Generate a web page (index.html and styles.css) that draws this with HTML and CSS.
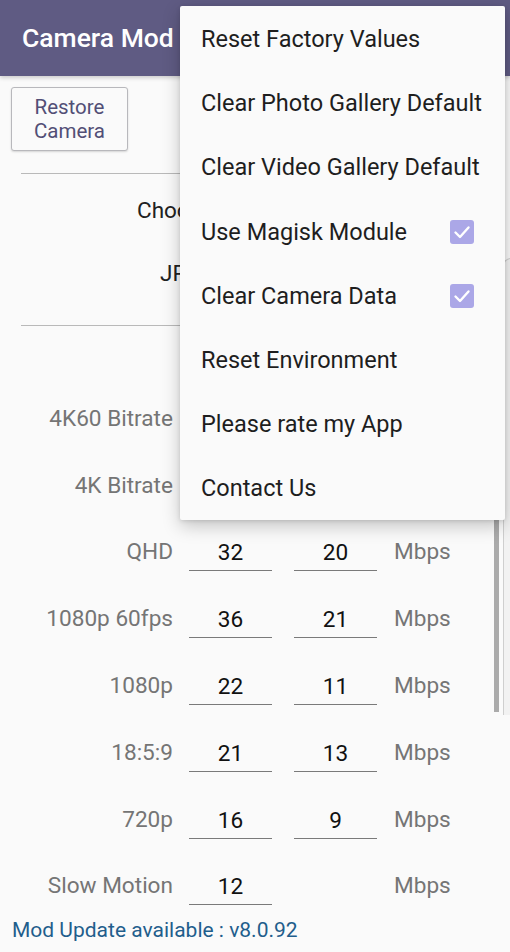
FILE: index.html
```html
<!DOCTYPE html>
<html>
<head>
<meta charset="utf-8">
<link rel="stylesheet" href="styles.css">
</head>
<body>
<div class="screen">
  <header class="appbar"><span class="title">Camera Mod</span></header>
  <main class="content">
    <button class="restore">Restore<br>Camera</button>
    <hr class="divider">
    <div class="choice choice-a">Choose Camera Mode</div>
    <div class="choice choice-b">JPEG Quality</div>
    <hr class="divider">
    <div class="rates">
      <div class="row"><span class="label">4K60 Bitrate</span><span class="field"></span><span class="field"></span><span class="unit"></span></div>
      <div class="row"><span class="label">4K Bitrate</span><span class="field"></span><span class="field"></span><span class="unit"></span></div>
      <div class="row"><span class="label">QHD</span><span class="field">32</span><span class="field">20</span><span class="unit">Mbps</span></div>
      <div class="row"><span class="label">1080p 60fps</span><span class="field">36</span><span class="field">21</span><span class="unit">Mbps</span></div>
      <div class="row"><span class="label">1080p</span><span class="field">22</span><span class="field">11</span><span class="unit">Mbps</span></div>
      <div class="row"><span class="label">18:5:9</span><span class="field">21</span><span class="field">13</span><span class="unit">Mbps</span></div>
      <div class="row"><span class="label">720p</span><span class="field">16</span><span class="field">9</span><span class="unit">Mbps</span></div>
      <div class="row"><span class="label">Slow Motion</span><span class="field">12</span><span class="empty"></span><span class="unit">Mbps</span></div>
    </div>
    <div class="update">Mod Update available : v8.0.92</div>
  </main>
  <div class="edge-panel"></div>
  <div class="scrollbar"></div>
  <ul class="menu">
    <li class="item">Reset Factory Values</li>
    <li class="item">Clear Photo Gallery Default</li>
    <li class="item">Clear Video Gallery Default</li>
    <li class="item">Use Magisk Module<span class="check"><svg viewBox="0 0 24 24" width="24" height="24"><path d="M5.5 12.5 L10 17 L18.5 7.5" fill="none" stroke="#fff" stroke-width="2.4" stroke-linecap="round" stroke-linejoin="round"/></svg></span></li>
    <li class="item">Clear Camera Data<span class="check"><svg viewBox="0 0 24 24" width="24" height="24"><path d="M5.5 12.5 L10 17 L18.5 7.5" fill="none" stroke="#fff" stroke-width="2.4" stroke-linecap="round" stroke-linejoin="round"/></svg></span></li>
    <li class="item">Reset Environment</li>
    <li class="item">Please rate my App</li>
    <li class="item">Contact Us</li>
  </ul>
</div>
</body>
</html>
```

FILE: styles.css
```css
* { box-sizing: border-box; }
html, body { margin: 0; padding: 0; }
body {
  background: #fafafa;
  font-family: Roboto, "Liberation Sans", sans-serif;
}
.screen {
  position: relative;
  width: 510px;
  height: 952px;
  overflow: hidden;
  background: #fafafa;
}
.appbar {
  height: 76px;
  background: #5f5b83;
  display: flex;
  align-items: center;
  padding-left: 22px;
  box-shadow: 0 2px 4px rgba(0,0,0,0.18);
}
.title {
  color: #fff;
  font-size: 26.5px;
  font-weight: 500;
  white-space: nowrap;
  margin-top: -1px;
}
.content {
  display: flex;
  flex-direction: column;
}
.restore {
  align-self: flex-start;
  margin: 11px 0 0 11px;
  width: 117px;
  height: 64px;
  border: 1px solid #b8b8bc;
  border-radius: 3px;
  background: #fafafa;
  box-shadow: 0 1px 2px rgba(0,0,0,0.15);
  color: #524f76;
  font-family: Roboto, sans-serif;
  font-size: 20.5px;
  line-height: 24px;
  padding: 0;
}
.divider {
  border: 0;
  border-top: 1.5px solid #b9b9b9;
  margin: 22px 21px 0 21px;
  height: 0;
}
.choice {
  font-size: 22.5px;
  color: #212121;
  height: 30px;
  line-height: 30px;
  white-space: nowrap;
}
.choice-a { margin-top: 21px; padding-left: 137px; }
.choice-b { margin-top: 33px; padding-left: 160px; }
.choice + .divider { margin-top: 37px; }
.rates {
  display: flex;
  flex-direction: column;
  margin-top: 59px;
}
.row {
  display: grid;
  grid-template-columns: 173px 99px 105px auto;
  height: 66.8px;
  align-items: center;
}
.label {
  text-align: right;
  color: #757575;
  font-size: 22.6px;
  white-space: nowrap;
}
.field {
  box-sizing: content-box;
  height: 34px;
  line-height: 34px;
  margin-top: 4px;
  text-align: center;
  color: #111;
  font-size: 22.6px;
  border-bottom: 1.5px solid #7a7a7a;
}
.row .field:nth-child(2) { margin-left: 16px; width: 83px; }
.row .field:nth-child(3) { margin-left: 22px; width: 83px; }
.unit {
  color: #757575;
  font-size: 22.6px;
  margin-left: 17px;
}
.update {
  margin: -3px 0 0 12px;
  color: #1f5e8c;
  font-size: 21px;
  line-height: 28px;
}
.scrollbar {
  position: absolute;
  left: 494px;
  top: 520px;
  width: 5px;
  height: 192px;
  background: #ababab;
}
.edge-panel {
  position: absolute;
  left: 503px;
  top: 258px;
  width: 12px;
  height: 457px;
  background: #f2f2f2;
  border-left: 1px solid #cfcfcf;
  border-top: 1px solid #cfcfcf;
  border-top-left-radius: 8px;
}
.menu {
  position: absolute;
  left: 180px;
  top: 6px;
  width: 325px;
  height: 514px;
  margin: 0;
  padding: 1px 0 0 0;
  list-style: none;
  background: #fafafa;
  border-radius: 2px;
  box-shadow: 0 6px 18px rgba(0,0,0,0.22), 0 1px 4px rgba(0,0,0,0.12);
}
.item {
  height: 64.2px;
  display: flex;
  align-items: center;
  justify-content: space-between;
  padding: 0 31px 0 21px;
  color: #1e1e1e;
  font-size: 23.5px;
  white-space: nowrap;
}
.check {
  width: 24px;
  height: 24px;
  border-radius: 3px;
  background: #aba7e7;
  display: flex;
}
```
